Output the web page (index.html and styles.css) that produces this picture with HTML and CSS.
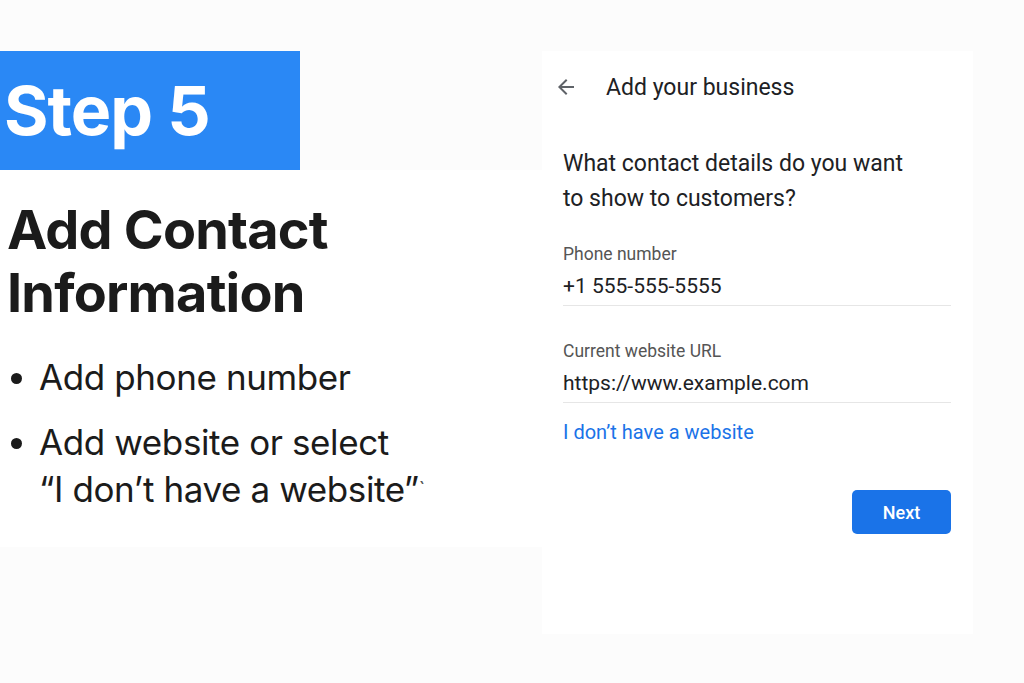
FILE: index.html
```html
<!DOCTYPE html>
<html lang="en">
<head>
<meta charset="utf-8">
<title>Step 5 - Add Contact Information</title>
<link rel="stylesheet" href="styles.css">
</head>
<body>
<main class="page">
  <section class="intro">
    <div class="step">Step 5</div>
    <div class="intro-body">
      <h1 class="title">Add Contact<br>Information</h1>
      <ul class="points">
        <li>Add phone number</li>
        <li>Add website or select<br>“I don’t have a website”<span class="tick">`</span></li>
      </ul>
    </div>
  </section>
  <section class="card">
    <header class="card-head">
      <svg class="back" viewBox="0 0 24 24" width="24" height="24" aria-hidden="true"><path d="M20 11H7.83l5.59-5.59L12 4l-8 8 8 8 1.41-1.41L7.83 13H20v-2z" fill="#5f6368"/></svg>
      <span class="card-title">Add your business</span>
    </header>
    <p class="question">What contact details do you want<br>to show to customers?</p>
    <div class="field">
      <div class="label">Phone number</div>
      <div class="value">+1 555-555-5555</div>
    </div>
    <div class="field">
      <div class="label">Current website URL</div>
      <div class="value">https://www.example.com</div>
    </div>
    <a class="link" href="#">I don’t have a website</a>
    <div class="actions">
      <button class="next" type="button">Next</button>
    </div>
  </section>
</main>
</body>
</html>
```
FILE: styles.css
```css
html, body {
  margin: 0;
  padding: 0;
  background: #fcfcfc;
  font-family: Roboto, "Noto Sans", Arial, sans-serif;
}
.page {
  display: flex;
  padding-top: 51px;
  height: 632px;
}
.intro {
  width: 542px;
  display: flex;
  flex-direction: column;
}
.step {
  width: 300px;
  height: 119px;
  background: #2a88f5;
  color: #fff;
  font-family: Inter, "Open Sans", sans-serif;
  font-weight: 700;
  font-size: 68px;
  line-height: 119px;
  padding-left: 4px;
  box-sizing: border-box;
  letter-spacing: -1px;
}
.intro-body {
  background: #ffffff;
  height: 377px;
  padding-left: 7px;
  padding-top: 28px;
  box-sizing: border-box;
}
.title {
  margin: 0;
  font-family: Inter, "Open Sans", sans-serif;
  font-weight: 700;
  font-size: 54px;
  line-height: 63px;
  color: #1b1b1b;
  letter-spacing: -0.8px;
}
.points {
  list-style: none;
  margin: 30px 0 0;
  padding: 0;
  font-family: Inter, "Open Sans", sans-serif;
  font-size: 35px;
  color: #1b1b1b;
  line-height: 47px;
  letter-spacing: -0.4px;
}
.points li {
  position: relative;
  padding-left: 32px;
  margin-bottom: 18px;
}
.points li::before {
  content: "";
  position: absolute;
  left: 4px;
  top: 19px;
  width: 11px;
  height: 11px;
  border-radius: 50%;
  background: #1b1b1b;
}
.tick {
  font-size: 20px;
  vertical-align: top;
  color: #555;
}
.card {
  width: 431px;
  height: 583px;
  background: #ffffff;
  padding: 22px 22px 0 21px;
  box-sizing: border-box;
  display: flex;
  flex-direction: column;
}
.card-head {
  display: flex;
  align-items: center;
  gap: 28px;
  height: 28px;
}
.back {
  margin-left: -9px;
}
.card-title {
  font-size: 23px;
  color: #202124;
}
.question {
  margin: 45px 0 0;
  font-size: 23px;
  line-height: 35px;
  color: #202124;
}
.field {
  border-bottom: 1px solid #e6e6e6;
  margin-top: 26px;
  padding-bottom: 5px;
}
.field + .field {
  margin-top: 33px;
}
.label {
  font-size: 17.5px;
  color: #555;
  line-height: 24px;
}
.value {
  font-size: 21px;
  color: #202124;
  line-height: 28px;
  margin-top: 6px;
}
.link {
  margin-top: 15px;
  font-size: 20px;
  color: #1a73e8;
  text-decoration: none;
  line-height: 28px;
}
.actions {
  display: flex;
  justify-content: flex-end;
  margin-top: 44px;
}
.next {
  width: 99px;
  height: 44px;
  border: none;
  border-radius: 5px;
  background: #1a73e8;
  color: #fff;
  font-family: Roboto, sans-serif;
  font-size: 18px;
  font-weight: 500;
}
```
